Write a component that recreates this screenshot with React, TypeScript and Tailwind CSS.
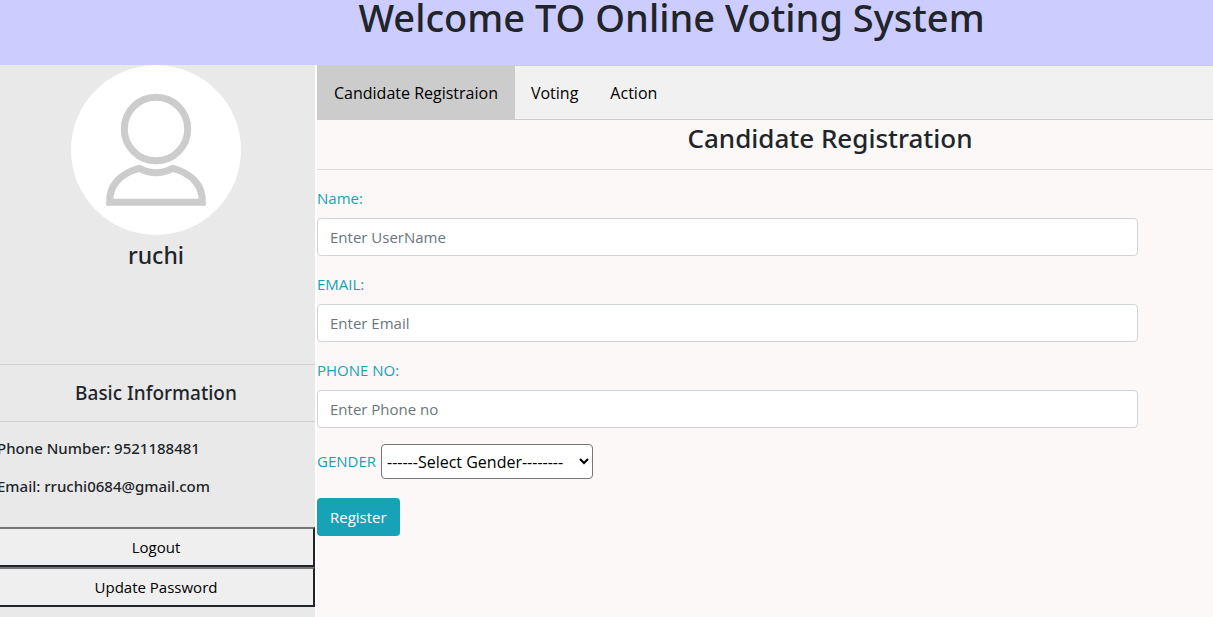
import React from "react";

const tabs = ["Candidate Registraion", "Voting", "Action"];

const fields = [
  { id: "name", label: "Name:", placeholder: "Enter UserName", type: "text" },
  { id: "email", label: "EMAIL:", placeholder: "Enter Email", type: "email" },
  { id: "phone", label: "PHONE NO:", placeholder: "Enter Phone no", type: "tel" },
];

function Avatar() {
  return (
    <svg viewBox="0 0 170 170" className="block size-[170px]" role="img" aria-label="Profile picture">
      <circle cx="85" cy="85" r="85" fill="#fff" />
      <g fill="none" stroke="#ccc" strokeWidth="7">
        <circle cx="85" cy="64" r="31.7" />
        <path d="M38.7 137.3H131.3C131.8 121 121.5 108.5 101.8 103.4Q85 112 68.2 103.4C48.5 108.5 38.2 121 38.7 137.3Z" />
      </g>
    </svg>
  );
}

function Sidebar() {
  const button =
    "h-10 w-full border-2 border-t-[#767676] border-l-[#767676] border-r-[#212529] border-b-[#212529] bg-[#efefef] text-[15px] text-black";
  return (
    <aside className="w-[315px] shrink-0 overflow-hidden bg-[#e9e9e9]">
      <div className="-ml-[3px] flex flex-col">
        <div className="flex h-[299px] flex-col items-center">
          <Avatar />
          <h4 className="mt-1 font-['Noto_Sans',sans-serif] text-[23px] leading-8 font-medium">ruchi</h4>
        </div>
        <h5 className="border-y border-[#d0d0d0] py-4 text-center font-['Noto_Sans',sans-serif] text-[19px] leading-6 font-medium">
          Basic Information
        </h5>
        <div className="flex flex-col gap-[18px] pt-4 pb-[31px] font-['Noto_Sans',sans-serif] text-[15px] leading-5 font-medium">
          <p>Phone Number: 9521188481</p>
          <p>Email: rruchi0684@gmail.com</p>
        </div>
        <button type="button" className={button}>Logout</button>
        <button type="button" className={button}>Update Password</button>
      </div>
    </aside>
  );
}

export default function App() {
  return (
    <div className="flex min-h-screen flex-col bg-white font-['Open_Sans','Noto_Sans',sans-serif] text-[15px] text-[#212529]">
      <header className="h-[65px] bg-[#ccccff] pl-[130px]">
        <h1 className="text-center font-['Noto_Sans',sans-serif] text-[38px] leading-[34px] font-medium whitespace-nowrap">
          Welcome TO Online Voting System
        </h1>
      </header>
      <div className="flex grow gap-0.5">
        <Sidebar />
        <main className="min-w-0 grow bg-[#fcf8f7]">
          <nav className="flex h-[55px] border-y border-[#ccc] bg-[#f1f1f1] text-[16px] text-black">
            {tabs.map((tab, i) => (
              <button
                key={tab}
                type="button"
                className={i === 0 ? "bg-[#ccc] px-[17px]" : "px-4"}
              >
                {tab}
              </button>
            ))}
          </nav>
          <h3 className="border-b border-[#e0dddc] pb-[13px] pl-[130px] text-center font-['Noto_Sans',sans-serif] text-[26px] leading-9 font-medium">
            Candidate Registration
          </h3>
          <form className="flex flex-col items-start gap-4 pt-4" onSubmit={(e) => e.preventDefault()}>
            {fields.map((f) => (
              <div key={f.id} className="flex w-11/12 flex-col gap-2">
                <label htmlFor={f.id} className="leading-6 text-[#17a2b8]">{f.label}</label>
                <input
                  id={f.id}
                  type={f.type}
                  placeholder={f.placeholder}
                  className="h-[38px] w-full rounded border border-[#ced4da] bg-white px-3 placeholder:text-[#6c757d]"
                />
              </div>
            ))}
            <div className="flex items-center gap-[5px]">
              <label htmlFor="gender" className="text-[#17a2b8]">GENDER</label>
              <select id="gender" className="h-[35px] w-[212px] rounded border border-[#767676] bg-white px-px text-[16px] text-black">
                <option>------Select Gender--------</option>
                <option>Male</option>
                <option>Female</option>
              </select>
            </div>
            <button type="submit" className="mt-[3px] h-[38px] rounded bg-[#17a2b8] px-[13px] text-white">
              Register
            </button>
          </form>
        </main>
      </div>
    </div>
  );
}
